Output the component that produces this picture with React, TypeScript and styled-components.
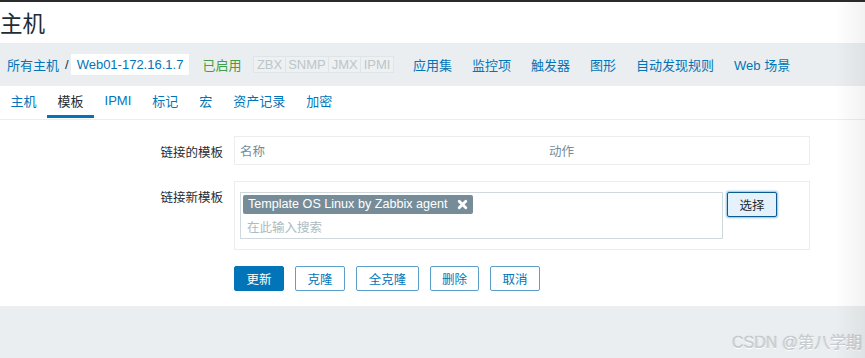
import styled, { createGlobalStyle } from "styled-components";

const GlobalStyle = createGlobalStyle`
  html, body {
    margin: 0;
    padding: 0;
    background: #ebeef0;
    font-family: "Liberation Sans", Arial, "Noto Sans CJK SC", sans-serif;
    color: #1f2c33;
  }
`;

const Page = styled.div`
  position: relative;
  width: 865px;
  height: 358px;
  overflow: hidden;
  background: #ebeef0;

  &::after {
    content: "";
    position: absolute;
    top: 0;
    right: 0;
    width: 30px;
    height: 100%;
    pointer-events: none;
    background: linear-gradient(to right, rgba(0, 0, 0, 0), rgba(0, 0, 0, 0.05));
  }
`;

const Header = styled.header`
  height: 43px;
  background: #fff;
  border-top: 2px solid #2b2b2b;
  box-sizing: border-box;
  display: flex;
  align-items: center;
`;

const Title = styled.h1`
  margin: 0 0 2px 0;
  font-size: 22.5px;
  font-weight: normal;
  color: #1f2c33;
`;

const NavBar = styled.nav`
  height: 43px;
  display: flex;
  align-items: center;
  padding-left: 7px;
  font-size: 13px;
`;

const Crumb = styled.a`
  color: #0275b8;
  text-decoration: none;
`;

const Slash = styled.span`
  color: #1f2c33;
  margin: 0 2px 0 6px;
`;

const HostBox = styled.span`
  background: #fff;
  color: #0275b8;
  padding: 0 6px;
  height: 21px;
  line-height: 21px;
  font-size: 13px;
  margin-right: 13px;
`;

const Enabled = styled.span`
  color: #429e47;
  margin-right: 12px;
`;

const StatusGroup = styled.span`
  display: flex;
  margin-right: 19px;
`;

const StatusBox = styled.span`
  border: 1px solid #dfe4e7;
  color: #bcc5ca;
  background: #eef1f2;
  font-size: 13px;
  height: 15px;
  line-height: 15px;
  padding: 0 2.5px;
  & + & {
    border-left: none;
  }
`;

const NavLink = styled.a`
  color: #0275b8;
  text-decoration: none;
  margin-right: 20px;
`;

const Card = styled.section`
  background: #fff;
  width: 100%;
`;

const Tabs = styled.div`
  height: 33px;
  display: flex;
  border-bottom: 1px solid #ebeef0;
  font-size: 13px;
`;

const Tab = styled.a<{ $active?: boolean }>`
  display: flex;
  align-items: center;
  padding: 0 10.5px;
  height: 32px;
  box-sizing: border-box;
  text-decoration: none;
  color: ${(p) => (p.$active ? "#1f2c33" : "#0275b8")};
  border-bottom: 3px solid ${(p) => (p.$active ? "#0275b8" : "transparent")};
`;

const Form = styled.div`
  padding: 16px 0 15px;
  display: flex;
  flex-direction: column;
  gap: 16px;
`;

const Row = styled.div`
  display: grid;
  grid-template-columns: 223px 576px;
  column-gap: 11px;
`;

const Label = styled.div`
  text-align: right;
  font-size: 12.5px;
  color: #1f2c33;
  padding-top: 6px;
`;

const TableBox = styled.div`
  border: 1px solid #ebeef0;
  height: 29px;
  box-sizing: border-box;
  display: grid;
  grid-template-columns: 309px 1fr;
  align-items: center;
  padding-left: 5px;
  font-size: 12.5px;
  color: #768d99;
`;

const FieldBox = styled.div`
  border: 1px solid #ebeef0;
  height: 69px;
  box-sizing: border-box;
  padding: 10px 0 0 5px;
  display: flex;
  align-items: flex-start;
  gap: 4px;
`;

const MultiSelect = styled.div`
  width: 483px;
  height: 47px;
  box-sizing: border-box;
  border: 1px solid #cfd8dc;
  padding: 2px 2px;
  display: flex;
  flex-direction: column;
  gap: 3px;
`;

const Tag = styled.span`
  align-self: flex-start;
  background: #768d99;
  color: #fff;
  font-size: 12.6px;
  height: 19px;
  line-height: 19px;
  padding: 0 5px 0 5px;
  border-radius: 2px;
  display: flex;
  align-items: center;
  gap: 9px;
`;

const Placeholder = styled.span`
  color: #acbbc2;
  font-size: 12.5px;
  padding-left: 4px;
`;

const SelectButton = styled.button`
  width: 50px;
  height: 25px;
  border: 1px solid #0b5b92;
  border-radius: 2px;
  background: #e5f2fb;
  color: #1f2c33;
  font-family: inherit;
  font-size: 12.5px;
  box-shadow: 0 0 2px 1px rgba(2, 117, 184, 0.45);
  padding: 0;
`;

const Actions = styled.div`
  display: flex;
  gap: 11px;
  padding-left: 234px;
`;

const Button = styled.button<{ $primary?: boolean; $w: number }>`
  width: ${(p) => p.$w}px;
  height: 25px;
  box-sizing: border-box;
  border-radius: 2px;
  border: 1px solid ${(p) => (p.$primary ? "#0275b8" : "#5d9fcb")};
  background: ${(p) => (p.$primary ? "#0275b8" : "#fff")};
  color: ${(p) => (p.$primary ? "#fff" : "#0275b8")};
  font-family: inherit;
  font-size: 12.5px;
  padding: 0;
`;

const Watermark = styled.div`
  position: absolute;
  right: 3px;
  bottom: 5px;
  font-size: 16px;
  color: #c9cdd1;
  text-shadow: 0 1px 0 #fff, 0 0 1px #9aa0a6;
`;

const Close = () => (
  <svg width="11" height="11" viewBox="0 0 10 10">
    <path d="M2 2 L8 8 M8 2 L2 8" stroke="#fff" strokeWidth="2.6" strokeLinecap="round" />
  </svg>
);

export default function App() {
  return (
    <>
      <GlobalStyle />
      <Page>
        <Header>
          <Title>主机</Title>
        </Header>
        <NavBar>
          <Crumb>所有主机</Crumb>
          <Slash>/</Slash>
          <HostBox>Web01-172.16.1.7</HostBox>
          <Enabled>已启用</Enabled>
          <StatusGroup>
            <StatusBox>ZBX</StatusBox>
            <StatusBox>SNMP</StatusBox>
            <StatusBox>JMX</StatusBox>
            <StatusBox>IPMI</StatusBox>
          </StatusGroup>
          <NavLink>应用集</NavLink>
          <NavLink>监控项</NavLink>
          <NavLink>触发器</NavLink>
          <NavLink>图形</NavLink>
          <NavLink>自动发现规则</NavLink>
          <NavLink>Web 场景</NavLink>
        </NavBar>
        <Card>
          <Tabs>
            <Tab>主机</Tab>
            <Tab $active>模板</Tab>
            <Tab>IPMI</Tab>
            <Tab>标记</Tab>
            <Tab>宏</Tab>
            <Tab>资产记录</Tab>
            <Tab>加密</Tab>
          </Tabs>
          <Form>
            <Row>
              <Label>链接的模板</Label>
              <TableBox>
                <span>名称</span>
                <span>动作</span>
              </TableBox>
            </Row>
            <Row>
              <Label>链接新模板</Label>
              <FieldBox>
                <MultiSelect>
                  <Tag>
                    Template OS Linux by Zabbix agent
                    <Close />
                  </Tag>
                  <Placeholder>在此输入搜索</Placeholder>
                </MultiSelect>
                <SelectButton>选择</SelectButton>
              </FieldBox>
            </Row>
            <Actions>
              <Button $primary $w={50}>更新</Button>
              <Button $w={50}>克隆</Button>
              <Button $w={63}>全克隆</Button>
              <Button $w={49}>删除</Button>
              <Button $w={50}>取消</Button>
            </Actions>
          </Form>
        </Card>
        <Watermark>CSDN @第八学期</Watermark>
      </Page>
    </>
  );
}
